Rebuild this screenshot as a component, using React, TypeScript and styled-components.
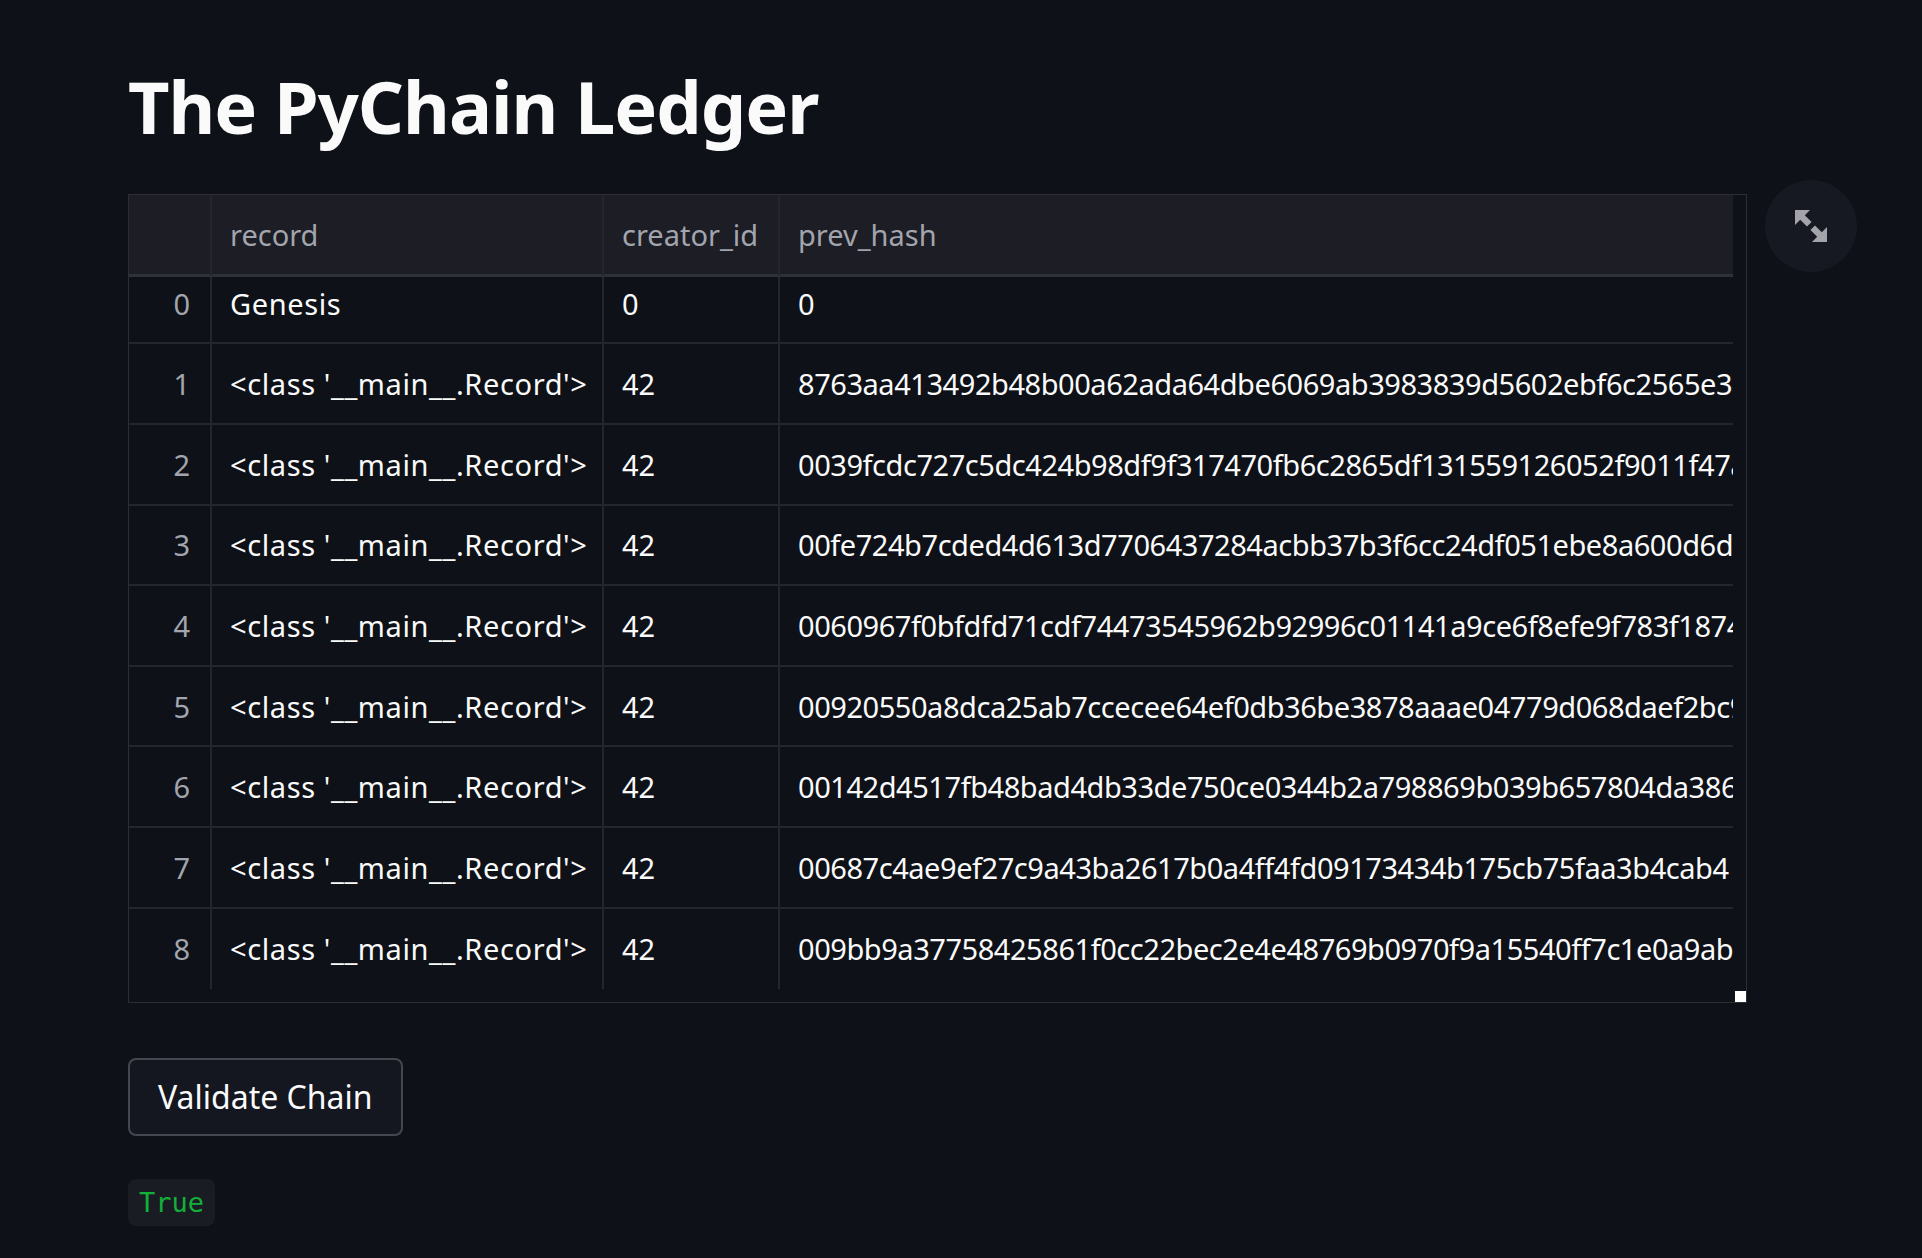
import React from "react";
import styled, { createGlobalStyle } from "styled-components";

const GlobalStyle = createGlobalStyle`
  html, body {
    margin: 0;
    padding: 0;
    background: #0e1117;
  }
  body {
    font-family: "Noto Sans", "Open Sans", sans-serif;
    color: #fafafa;
  }
`;

const Main = styled.main`
  display: flex;
  flex-direction: column;
  align-items: flex-start;
  padding: 63px 0 40px 128px;
  min-height: 1258px;
  box-sizing: border-box;
`;

const Title = styled.h1`
  margin: 0;
  font-size: 72px;
  line-height: 1.2;
  font-weight: 700;
  letter-spacing: -1px;
  color: #fafafa;
`;

const TableFrame = styled.div`
  position: relative;
  margin-top: 45px;
  border: 1px solid #2c2e36;
  padding: 0 13px 13px 0;
  background: #0e1117;
`;

const Grid = styled.div`
  display: grid;
  grid-template-columns: 83px 392px 176px 953px;
  grid-template-rows: 82px 67px repeat(8, 80.6px);
`;

const Cell = styled.div<{
  $header?: boolean;
  $index?: boolean;
  $lastCol?: boolean;
  $lastRow?: boolean;
  $first?: boolean;
  $tracking?: number;
}>`
  display: flex;
  align-items: center;
  justify-content: ${(p) => (p.$index ? "flex-end" : "flex-start")};
  padding: ${(p) => (p.$index ? "0 20px 0 0" : "0 0 0 18px")};
  padding-bottom: ${(p) => (p.$first ? "13px" : "0")};
  box-sizing: border-box;
  overflow: hidden;
  white-space: nowrap;
  font-size: 29px;
  letter-spacing: ${(p) => (p.$tracking ? `${p.$tracking}px` : "normal")};
  color: ${(p) => (p.$header || p.$index ? "#a2a5ad" : "#fafafa")};
  background: ${(p) => (p.$header ? "#1c1d25" : "transparent")};
  border-right: ${(p) => (p.$lastCol ? "none" : "2px solid #24262e")};
  border-bottom: ${(p) =>
    p.$lastRow ? "none" : p.$header ? "3px solid #2f3139" : "2px solid #24262e"};
`;

const ExpandButton = styled.button`
  position: absolute;
  left: calc(100% + 19px);
  top: -15px;
  width: 92px;
  height: 92px;
  border-radius: 50%;
  border: none;
  background: #161922;
  display: flex;
  align-items: center;
  justify-content: center;
  padding: 0;
`;

const ResizeHandle = styled.div`
  position: absolute;
  right: 0;
  bottom: 0;
  width: 11px;
  height: 11px;
  background: #ffffff;
`;

const ActionButton = styled.button`
  margin-top: 55px;
  height: 78px;
  padding: 0 28px;
  border-radius: 8px;
  border: 2px solid #45474e;
  background: #141720;
  color: #fafafa;
  font-family: "Noto Sans", "Open Sans", sans-serif;
  font-size: 32px;
  line-height: 1;
`;

const CodeBadge = styled.code`
  margin-top: 43px;
  display: inline-flex;
  align-items: center;
  height: 47px;
  padding: 0 11px;
  border-radius: 8px;
  background: #1a1c23;
  color: #12b03a;
  font-family: "DejaVu Sans Mono", "Liberation Mono", monospace;
  font-size: 27px;
`;

const ExpandIcon = () => (
  <svg width="32" height="32" viewBox="0 0 32 32" fill="#a3a4a9">
    <path d="M0 0 H15 L9.8 5.2 L16.6 12 L12 16.6 L5.2 9.8 L0 15 Z" />
    <path d="M32 32 H17 L22.2 26.8 L15.4 20 L20 15.4 L26.8 22.2 L32 17 Z" />
  </svg>
);

const columns = ["record", "creator_id", "prev_hash"];
const tracking = [0.6, 0, -0.45];

const rows: [string, string, string][] = [
  ["Genesis", "0", "0"],
  ["<class '__main__.Record'>", "42", "8763aa413492b48b00a62ada64dbe6069ab3983839d5602ebf6c2565e3a1"],
  ["<class '__main__.Record'>", "42", "0039fcdc727c5dc424b98df9f317470fb6c2865df131559126052f9011f47a"],
  ["<class '__main__.Record'>", "42", "00fe724b7cded4d613d7706437284acbb37b3f6cc24df051ebe8a600d6d2e"],
  ["<class '__main__.Record'>", "42", "0060967f0bfdfd71cdf74473545962b92996c01141a9ce6f8efe9f783f1874"],
  ["<class '__main__.Record'>", "42", "00920550a8dca25ab7ccecee64ef0db36be3878aaae04779d068daef2bc9"],
  ["<class '__main__.Record'>", "42", "00142d4517fb48bad4db33de750ce0344b2a798869b039b657804da386b"],
  ["<class '__main__.Record'>", "42", "00687c4ae9ef27c9a43ba2617b0a4ff4fd09173434b175cb75faa3b4cab4"],
  ["<class '__main__.Record'>", "42", "009bb9a37758425861f0cc22bec2e4e48769b0970f9a15540ff7c1e0a9ab"],
];

export default function App() {
  return (
    <>
      <GlobalStyle />
      <Main>
        <Title>The PyChain Ledger</Title>
        <TableFrame>
          <Grid>
            <Cell $header $index />
            {columns.map((c, i) => (
              <Cell key={c} $header $lastCol={i === columns.length - 1}>
                {c}
              </Cell>
            ))}
            {rows.map((r, ri) => {
              const last = ri === rows.length - 1;
              const first = ri === 0;
              return (
                <React.Fragment key={ri}>
                  <Cell $index $lastRow={last} $first={first}>
                    {ri}
                  </Cell>
                  {r.map((v, ci) => (
                    <Cell
                      key={ci}
                      $lastRow={last}
                      $first={first}
                      $tracking={tracking[ci]}
                      $lastCol={ci === r.length - 1}
                    >
                      {v}
                    </Cell>
                  ))}
                </React.Fragment>
              );
            })}
          </Grid>
          <ResizeHandle />
          <ExpandButton aria-label="View fullscreen">
            <ExpandIcon />
          </ExpandButton>
        </TableFrame>
        <ActionButton>Validate Chain</ActionButton>
        <CodeBadge>True</CodeBadge>
      </Main>
    </>
  );
}
